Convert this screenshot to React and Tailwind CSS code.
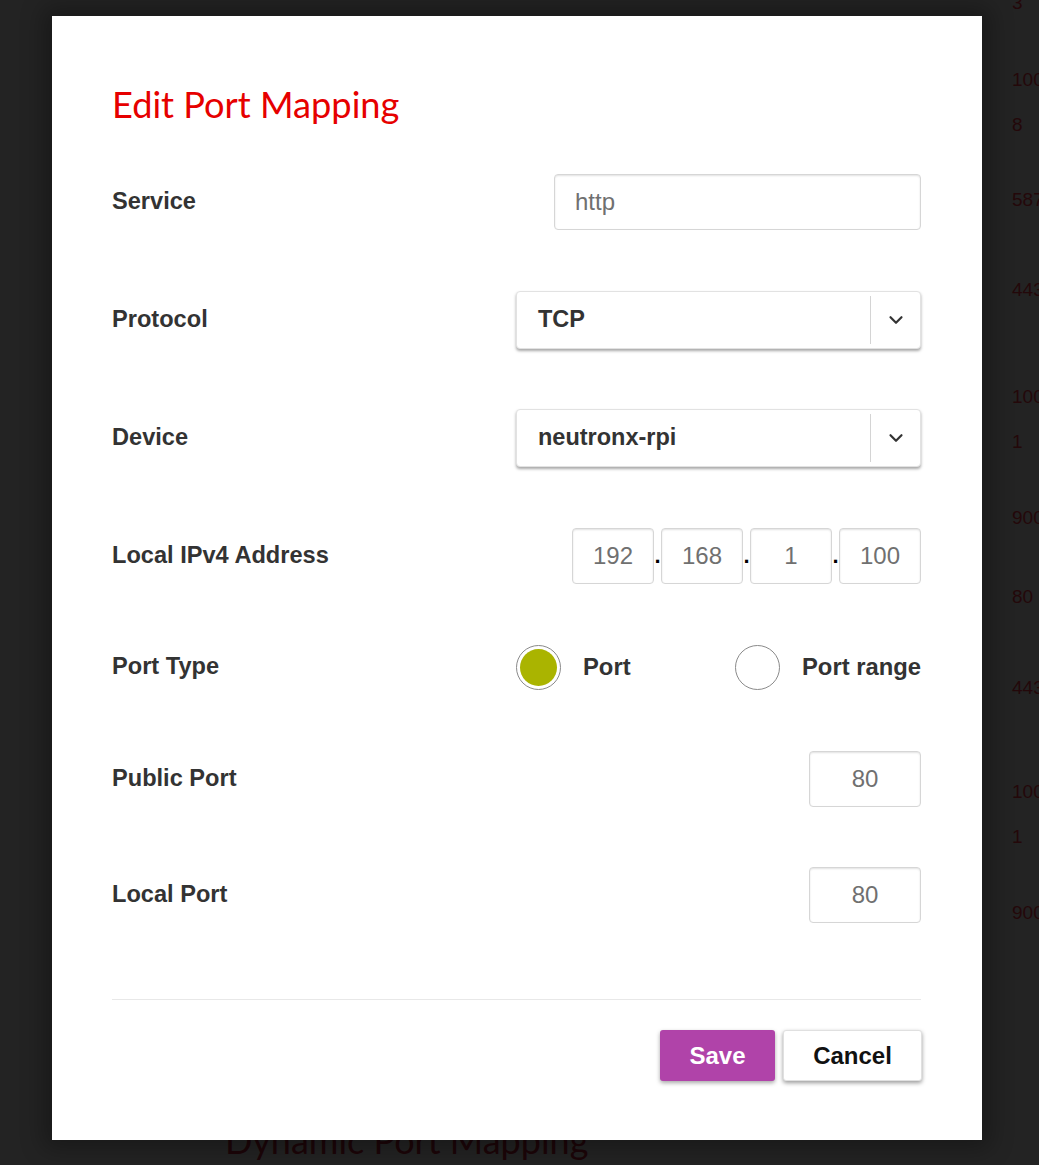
import React from "react";
import { ChevronDown } from "lucide-react";

const bgNumbers = [
  { v: "3", cls: "mt-[-8px]" },
  { v: "100", cls: "mt-[55px]" },
  { v: "8", cls: "mt-[23px]" },
  { v: "587", cls: "mt-[53px]" },
  { v: "443", cls: "mt-[68px]" },
  { v: "100", cls: "mt-[85px]" },
  { v: "1", cls: "mt-[23px]" },
  { v: "900", cls: "mt-[54px]" },
  { v: "80", cls: "mt-[57px]" },
  { v: "443", cls: "mt-[69px]" },
  { v: "100", cls: "mt-[82px]" },
  { v: "1", cls: "mt-[23px]" },
  { v: "900", cls: "mt-[54px]" },
];

const labelCls = "text-[23.6px] font-bold text-[#333333]";
const inputCls =
  "h-[56px] rounded-[4px] border border-[#d6d6d6] bg-white text-[24px] text-[#707070] outline-none shadow-[inset_0_1px_2px_rgba(0,0,0,0.12)]";

const Select = ({ value }) => (
  <div className="flex h-[58px] w-[405px] items-center rounded-[4px] border border-[#e2e2e2] bg-white shadow-[0_2px_3px_rgba(0,0,0,0.35)]">
    <span className="flex-1 pl-[21px] text-[23.5px] font-bold text-[#333333]">
      {value}
    </span>
    <div className="h-[48px] w-px bg-[#d4d4d4]" />
    <div className="flex w-[49px] items-center justify-center text-[#333333]">
      <ChevronDown size={22} strokeWidth={2.4} />
    </div>
  </div>
);

const Radio = ({ checked, label }) => (
  <label className="flex items-center gap-[22px]">
    <span className="flex h-[45px] w-[45px] items-center justify-center rounded-full border border-[#8a8a8a] bg-white">
      {checked && (
        <span className="h-[37px] w-[37px] rounded-full bg-[#aab400]" />
      )}
    </span>
    <span className="text-[23.8px] font-bold text-[#333333]">{label}</span>
  </label>
);

const Dot = () => (
  <span className="w-[7px] text-center text-[22px] font-bold leading-[56px] text-black">
    .
  </span>
);

export default function App() {
  return (
    <div
      className="relative h-[1165px] w-full overflow-hidden bg-[#232323]"
      style={{ fontFamily: '"Liberation Sans", Arial, sans-serif' }}
    >
      {/* page behind the dialog */}
      <div className="flex flex-col">
        <div className="flex flex-col pl-[1012px] text-[19px] leading-[22px] text-[#24080a]">
          {bgNumbers.map((n, i) => (
            <div key={i} className={n.cls}>
              {n.v}
            </div>
          ))}
        </div>
        <h2
          className="mt-[194px] pl-[225px] text-[36px] leading-[44px] text-[#1c0508]"
          style={{ fontFamily: "Lato, sans-serif" }}
        >
          Dynamic Port Mapping
        </h2>
      </div>

      {/* dialog */}
      <div className="absolute left-[52px] top-[16px] w-[930px] bg-white pb-[59px] pl-[60px] pr-[61px] pt-[66px] shadow-[0_0_22px_8px_rgba(0,0,0,0.3)]">
        <h1
          className="text-[36.2px] leading-[44px] text-[#e60000]"
          style={{ fontFamily: "Lato, sans-serif" }}
        >
          Edit Port Mapping
        </h1>

        <div className="mt-[17px] flex flex-col">
          <div className="flex h-[118px] items-center justify-between">
            <span className={labelCls}>Service</span>
            <input
              className={`${inputCls} w-[367px] px-[20px]`}
              defaultValue="http"
            />
          </div>
          <div className="flex h-[118px] items-center justify-between">
            <span className={labelCls}>Protocol</span>
            <Select value="TCP" />
          </div>
          <div className="flex h-[118px] items-center justify-between">
            <span className={labelCls}>Device</span>
            <Select value="neutronx-rpi" />
          </div>
          <div className="flex h-[118px] items-center justify-between">
            <span className={labelCls}>Local IPv4 Address</span>
            <div className="flex items-center">
              <input className={`${inputCls} w-[82px] text-center`} defaultValue="192" />
              <Dot />
              <input className={`${inputCls} w-[82px] text-center`} defaultValue="168" />
              <Dot />
              <input className={`${inputCls} w-[82px] text-center`} defaultValue="1" />
              <Dot />
              <input className={`${inputCls} w-[82px] text-center`} defaultValue="100" />
            </div>
          </div>
          <div className="flex h-[104px] items-center justify-between">
            <span className={labelCls}>Port Type</span>
            <div className="flex w-[405px] items-center justify-between">
              <Radio checked label="Port" />
              <Radio label="Port range" />
            </div>
          </div>
          <div className="flex h-[120px] items-center justify-between">
            <span className={labelCls}>Public Port</span>
            <input className={`${inputCls} w-[112px] text-center`} defaultValue="80" />
          </div>
          <div className="flex h-[112px] items-center justify-between">
            <span className={labelCls}>Local Port</span>
            <input className={`${inputCls} w-[112px] text-center`} defaultValue="80" />
          </div>
        </div>

        <div className="mt-[48px] h-px bg-[#e8e8e8]" />

        <div className="mt-[30px] flex justify-end gap-[8px]">
          <button className="h-[51px] w-[115px] rounded-[3px] bg-[#b043a9] text-[24px] font-bold text-white shadow-[0_2px_4px_rgba(0,0,0,0.35)]">
            Save
          </button>
          <button className="mr-[-1px] h-[51px] w-[139px] rounded-[3px] border border-[#e0e0e0] bg-white text-[24px] font-bold text-[#111111] shadow-[0_2px_4px_rgba(0,0,0,0.4)]">
            Cancel
          </button>
        </div>
      </div>
    </div>
  );
}
